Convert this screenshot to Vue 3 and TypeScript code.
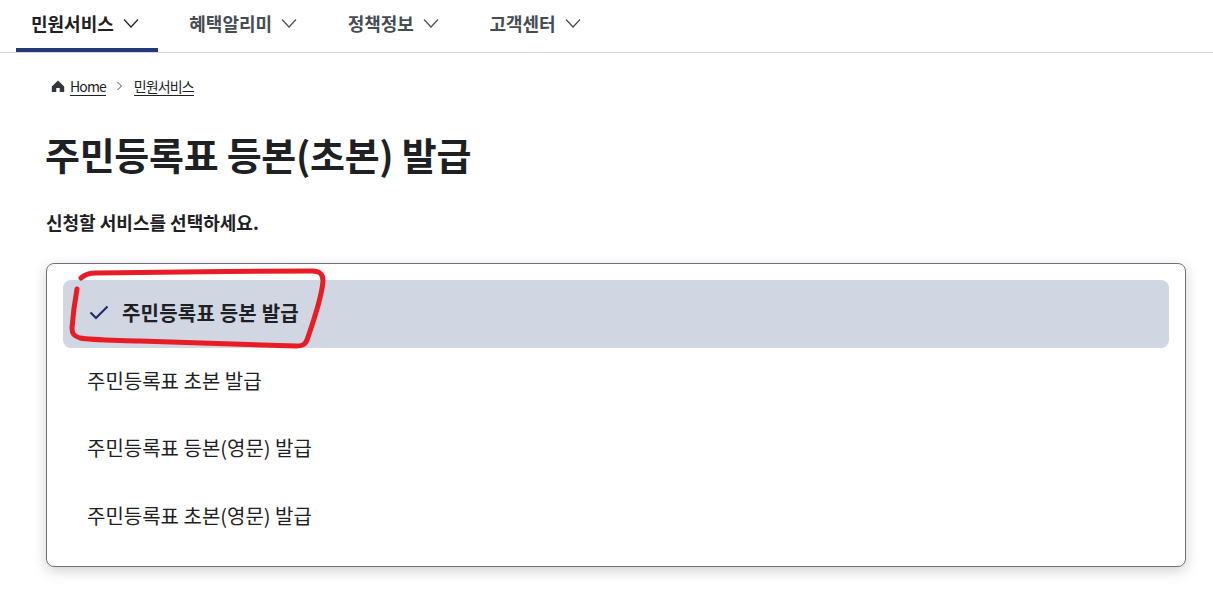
<script setup lang="ts">
interface MenuItem {
  label: string
  active?: boolean
}

const menus: MenuItem[] = [
  { label: '민원서비스', active: true },
  { label: '혜택알리미' },
  { label: '정책정보' },
  { label: '고객센터' }
]

const services: MenuItem[] = [
  { label: '주민등록표 등본 발급', active: true },
  { label: '주민등록표 초본 발급' },
  { label: '주민등록표 등본(영문) 발급' },
  { label: '주민등록표 초본(영문) 발급' }
]
</script>

<template>
  <div class="page">
    <nav class="gnb">
      <a v-for="menu in menus" :key="menu.label" class="gnb-item" :class="{ active: menu.active }">
        {{ menu.label }}
        <svg class="chevron" width="16" height="16" viewBox="0 0 16 16" fill="none">
          <path d="M1 4.5l7 7.5 7-7.5" stroke="currentColor" stroke-width="1.2" />
        </svg>
      </a>
    </nav>

    <main class="content">
      <div class="breadcrumb">
        <svg class="home" width="14" height="14" viewBox="0 0 14 14">
          <path d="M7 1.5L.8 7.5V13h4.5V9h3.4v4h4.5V7.5z" fill="#33363d" />
        </svg>
        <a class="crumb">Home</a>
        <svg class="sep" width="8" height="10" viewBox="0 0 8 10" fill="none">
          <path d="M1.5 1l4 4-4 4" stroke="#464c53" stroke-width="1" />
        </svg>
        <a class="crumb">민원서비스</a>
      </div>

      <h1 class="title">주민등록표 등본(초본) 발급</h1>
      <p class="lead">신청할 서비스를 선택하세요.</p>

      <ul class="card">
        <li v-for="item in services" :key="item.label" class="option" :class="{ selected: item.active }">
          <svg v-if="item.active" class="check" width="20" height="20" viewBox="0 0 20 20" fill="none">
            <path d="M1.5 9.5L7 15 18.5 3.5" stroke="#1f2f66" stroke-width="2.2" />
          </svg>
          {{ item.label }}
        </li>
      </ul>
    </main>

    <!-- hand drawn red mark on top of the screenshot -->
    <svg class="scribble" width="280" height="100" viewBox="60 260 280 100" fill="none">
      <path
        d="M81 278C84 275 88 273 96 273C150 272 260 271 312 271C320 271 323 274 323 281C322 295 314 320 307 340C305 345 302 346 296 346C250 345 200 343 140 341C110 340 90 340 80 338C74 336 72 334 72 328C73 315 75 300 77 289"
        stroke="#e81c24"
        stroke-width="5"
        stroke-linecap="round"
        stroke-linejoin="round"
      />
    </svg>
  </div>
</template>

<style>
html,
body {
  margin: 0;
  background: #fff;
}
</style>

<style scoped>
.page {
  position: relative;
  min-height: 590px;
  overflow: hidden;
  font-family: "Noto Sans CJK KR", "Noto Sans", sans-serif;
  color: #1e2124;
}

.gnb {
  display: flex;
  gap: 16.5px;
  height: 52px;
  padding-left: 16px;
  border-bottom: 1px solid #d0d4da;
}

.gnb-item {
  display: flex;
  align-items: center;
  gap: 9px;
  height: 45px;
  padding: 0 19px 3px 15px;
  font-size: 18px;
  font-weight: 700;
  color: #464c53;
  border-bottom: 4px solid transparent;
}

.gnb-item.active {
  color: #1e2124;
  border-bottom-color: #233876;
}

.chevron {
  flex: none;
  margin-top: 1px;
}

.content {
  padding: 22px 27px 23px 46px;
}

.breadcrumb {
  display: flex;
  align-items: center;
  height: 22px;
  padding-left: 5px;
  font-size: 14px;
  letter-spacing: -0.9px;
}

.home {
  margin-right: 5px;
}

.crumb {
  border-bottom: 1px solid #1e2124;
  line-height: 18px;
}

.sep {
  margin: 0 10px;
}

.title {
  margin: 29px 0 0 -1px;
  font-size: 38px;
  line-height: 56px;
  font-weight: 700;
  letter-spacing: -0.3px;
}

.lead {
  margin: 27px 0 0;
  font-size: 18px;
  line-height: 26px;
  font-weight: 700;
}

.card {
  list-style: none;
  margin: 28px 0 0;
  padding: 16px;
  border: 1px solid #6d7279;
  border-radius: 8px;
  box-shadow: 0 4px 14px rgba(0, 0, 0, 0.18);
  background: #fff;
}

.option {
  display: flex;
  align-items: center;
  height: 65.5px;
  padding: 0 24px 2px;
  border-radius: 8px;
  font-size: 20px;
}

.option.selected {
  background: #d0d6e2;
  font-weight: 700;
  padding-left: 26px;
  letter-spacing: 0.2px;
}

.check {
  margin-right: 13px;
}

.scribble {
  position: absolute;
  left: 60px;
  top: 260px;
}
</style>
